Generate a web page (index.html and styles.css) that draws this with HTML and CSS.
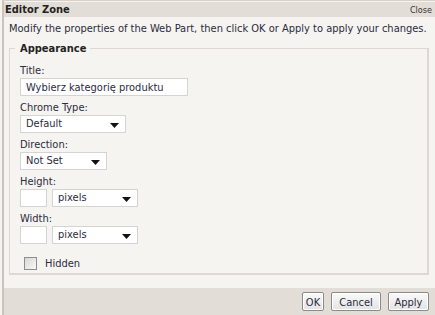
FILE: index.html
```html
<!DOCTYPE html>
<html lang="en">
<head>
  <meta charset="UTF-8">
  <title>Editor Zone</title>
  <link rel="stylesheet" href="styles.css">
</head>
<body>
  <div class="zone">
    <div class="zone-head">
      <span class="zone-title">Editor Zone</span>
      <a class="close" href="#">Close</a>
    </div>
    <div class="zone-body">
      <p class="intro">Modify the properties of the Web Part, then click OK or Apply to apply your changes.</p>
      <fieldset>
        <legend>Appearance</legend>
        <label class="field">
          <span>Title:</span>
          <input type="text" class="title-input" value="Wybierz kategorię produktu">
        </label>
        <label class="field">
          <span>Chrome Type:</span>
          <span class="select w-chrome">Default<svg viewBox="0 0 9 5"><path d="M0 0h9L4.5 5z"/></svg></span>
        </label>
        <label class="field">
          <span>Direction:</span>
          <span class="select w-dir">Not Set<svg viewBox="0 0 9 5"><path d="M0 0h9L4.5 5z"/></svg></span>
        </label>
        <div class="field">
          <span>Height:</span>
          <div class="pair">
            <input type="text" class="num">
            <span class="select w-unit">pixels<svg viewBox="0 0 9 5"><path d="M0 0h9L4.5 5z"/></svg></span>
          </div>
        </div>
        <div class="field">
          <span>Width:</span>
          <div class="pair">
            <input type="text" class="num">
            <span class="select w-unit">pixels<svg viewBox="0 0 9 5"><path d="M0 0h9L4.5 5z"/></svg></span>
          </div>
        </div>
        <label class="check">
          <span class="box"></span>
          <span>Hidden</span>
        </label>
      </fieldset>
    </div>
    <div class="zone-foot">
      <button class="btn-ok">OK</button>
      <button class="btn-cancel">Cancel</button>
      <button class="btn-apply">Apply</button>
    </div>
  </div>
</body>
</html>
```
FILE: styles.css
```css
* {
  margin: 0;
  padding: 0;
  box-sizing: border-box;
}
body {
  background: #f5f4f0;
  font-family: "DejaVu Sans Condensed", "DejaVu Sans", sans-serif;
  font-size: 11px;
  color: #333;
}
.zone {
  height: 315px;
  margin-left: 2px;
  border-left: 2px solid #c9c5be;
  border-top: 1px solid #d6d2cb;
  display: flex;
  flex-direction: column;
}
.zone-head {
  margin-top: 1px;
  height: 15px;
  background: #e2ded7;
  display: flex;
  justify-content: space-between;
  align-items: center;
  padding: 0 3px 0 1px;
}
.zone-title {
  font-weight: bold;
  font-size: 11px;
  color: #222;
}
.close {
  font-size: 9px;
  color: #333;
  text-decoration: none;
}
.zone-body {
  flex: 1;
  padding: 5px 6px 7px 5px;
}
.intro {
  color: #2b2b40;
  line-height: 14px;
}
fieldset {
  margin-top: 6px;
  border: 2px solid #dcd9d3;
  border-width: 1px 2px 2px 1px;
  padding: 9px 0 10px 10px;
  height: 233px;
}
legend {
  font-weight: bold;
  color: #222;
  padding: 0 4px 0 5px;
  margin-left: -5px;
}
.field {
  display: flex;
  flex-direction: column;
  align-items: flex-start;
  margin-bottom: 5px;
  color: #2b2b40;
  line-height: 14px;
}
input[type="text"] {
  font: inherit;
  color: #2b2b40;
  background: #fff;
  border: 1px solid #d4d4d4;
  height: 18px;
  padding: 0 5px;
  outline: none;
}
.title-input {
  width: 168px;
}
.select {
  position: relative;
  display: block;
  background: #fff;
  border: 1px solid #d4d4d4;
  height: 18px;
  line-height: 16px;
  padding: 0 5px;
  color: #2b2b40;
}
.select svg {
  position: absolute;
  right: 6px;
  top: 7px;
  width: 9px;
  height: 5px;
  fill: #111;
}
.w-chrome { width: 106px; }
.w-dir { width: 87px; }
.w-unit { width: 86px; }
.pair {
  display: flex;
  gap: 5px;
}
.num {
  width: 27px;
}
.check {
  display: flex;
  align-items: center;
  gap: 8px;
  margin: 13px 0 0 4px;
  color: #2b2b40;
}
.box {
  width: 13px;
  height: 13px;
  border: 1px solid #8d8d8d;
  background: linear-gradient(135deg, #d8d8d4, #f8f8f6);
}
.zone-foot {
  height: 27px;
  background: #e2ddd6;
  display: flex;
  justify-content: flex-end;
  align-items: flex-start;
  gap: 7px;
  padding: 4px 6px 0 0;
}
button {
  font: inherit;
  font-size: 11px;
  color: #2b2b40;
  height: 19px;
  padding: 1px 0 0;
  border: 1px solid #8a8a8a;
  border-radius: 2px;
  background: linear-gradient(#fafafa, #e3e3e3);
  box-shadow: inset 0 0 0 1px #fff;
}
.btn-ok { width: 22px; }
.btn-cancel { width: 50px; }
.btn-apply { width: 41px; }
```
